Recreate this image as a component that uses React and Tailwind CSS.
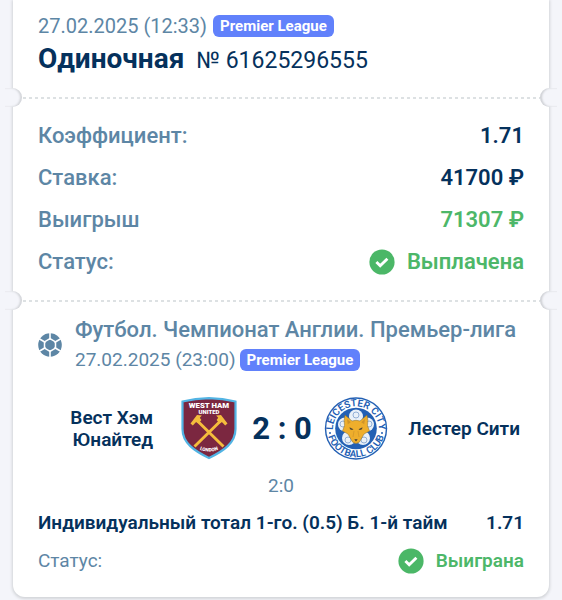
const summary = [
  { label: 'Коэффициент:', value: '1.71', tone: 'text-[#05315c]' },
  { label: 'Ставка:', value: '41700 ₽', tone: 'text-[#05315c]' },
  { label: 'Выигрыш', value: '71307 ₽', tone: 'text-[#4db769]' },
];

const LeagueBadge = () => (
  <span className="rounded-md bg-[#6181fb] px-[7px] text-[15px] leading-[22px] font-bold whitespace-nowrap text-white">
    Premier League
  </span>
);

const CheckIcon = () => (
  <svg viewBox="0 0 26 26" className="h-[26px] w-[26px] shrink-0" aria-hidden="true">
    <circle cx="13" cy="13" r="12.6" fill="#4bb767" />
    <path d="M7.4 13l3.8 3.8 7.2-7" fill="none" stroke="#fff" strokeWidth="2.9" />
  </svg>
);

const BallIcon = () => (
  <svg viewBox="0 0 24 24" className="h-6 w-6 shrink-0" aria-hidden="true">
    <circle cx="12" cy="12" r="11.8" fill="#5d86a5" />
    <g stroke="#fff" fill="none">
      <path d="M12 0v7M12 17v7M7.6 9.5L1.2 5.8M16.4 9.5l6.400-3.700M7.600 14.500l-6.400 3.700M16.400 14.500l6.400 3.700" strokeWidth="1.6" />
      <path d="M12 5.700l5.500 3.150v6.300L12 18.300l-5.500-3.150v-6.300z" strokeWidth="1.500" />
    </g>
  </svg>
);

const WestHamLogo = () => (
  <svg viewBox="0 1 58 64" className="h-16 w-[58px] shrink-0" role="img" aria-label="West Ham United">
    <path
      d="M29 2.200c9 .2 18 1.300 26.500 3.300V33c0 14-12 22-26.500 29C14.500 55 2.500 47 2.500 33V5.500C11 3.500 20 2.400 29 2.200z"
      fill="#7b2740"
      stroke="#52b4e4"
      strokeWidth="2.200"
    />
    <path d="M17 24.500L43.500 50.500M41 24.500L14.500 50.500" stroke="#f5bd3c" strokeWidth="2.900" />
    <g fill="#f5bd3c">
      <path d="M10.500 27.500l6.500-8.500 4.800.6-2 2.200 1.600 2.200-3 3.600-2.300-1.700-3.300 3.600z" />
      <path d="M47.500 27.500L41 19l-4.800.6 2 2.200-1.600 2.200 3 3.600 2.300-1.700 3.300 3.600z" />
    </g>
    <g fill="#fff" fontFamily="Roboto, sans-serif" fontWeight="900" textAnchor="middle">
      <text x="29" y="11.500" fontSize="7.800">WEST HAM</text>
      <text x="29" y="18" fontSize="6">UNITED</text>
      <path id="whu-london" d="M17 52.500Q29 58.500 41 52.500" fill="none" />
      <text fontSize="4.800">
        <textPath href="#whu-london" startOffset="50%">LONDON</textPath>
      </text>
    </g>
  </svg>
);

const LeicesterLogo = () => (
  <svg viewBox="0 1 64 64" className="h-16 w-16 shrink-0" role="img" aria-label="Leicester City">
    <defs>
      <path id="lcfc-top" d="M9.300 37a23 23 0 1 1 45.400 0" />
      <path id="lcfc-bottom" d="M2.800 32a29.200 29.200 0 0 0 58.400 0" />
    </defs>
    <circle cx="32" cy="32.500" r="31.200" fill="#2360b4" />
    <circle cx="32" cy="32.500" r="29.800" fill="#fff" />
    <circle cx="32" cy="32.500" r="20.800" fill="#2360b4" />
    <g fill="#e9f0f8">
      <circle cx="32" cy="20.500" r="7" />
      <circle cx="43" cy="28.500" r="7" />
      <circle cx="39" cy="42" r="7" />
      <circle cx="25" cy="42" r="7" />
      <circle cx="21" cy="28.500" r="7" />
    </g>
    <g fill="none" stroke="#7d9fce" strokeWidth=".8">
      <circle cx="32" cy="19" r="3" />
      <circle cx="45" cy="28" r="3" />
      <circle cx="40" cy="44" r="3" />
      <circle cx="24" cy="44" r="3" />
      <circle cx="19" cy="28" r="3" />
    </g>
    <path
      d="M21 19l7 6q4-1.500 8 0l7-6q1.500 5.500.5 10.500l2 5.500-5.500 3-4.500 8q-3.500 3-7 0l-4.500-8-5.500-3 2-5.500q-1-5 .5-10.500z"
      fill="#eeae2c"
      stroke="#7d6a37"
      strokeWidth=".5"
    />
    <path d="M23 23l3.800 3.300-3 2zM41 23l-3.800 3.300 3 2z" fill="#cf942a" />
    <path d="M25.500 31.300l4 2-1.500.8-2-.8zM38.500 31.300l-4 2 1.500.8 2-.8z" fill="#4b4435" />
    <path d="M30.300 43.300h3.400l-1.700 2.200z" fill="#3f3b35" />
    <path d="M30 35l-1 6M34 35l1 6" fill="none" stroke="#cf942a" strokeWidth=".7" />
    <g fill="#2360b4" fontFamily="Roboto, sans-serif" fontWeight="600" textAnchor="middle" fontSize="9.800">
      <text>
        <textPath href="#lcfc-top" startOffset="50%">LEICESTER CITY</textPath>
      </text>
      <text>
        <textPath href="#lcfc-bottom" startOffset="50%">FOOTBALL CLUB</textPath>
      </text>
    </g>
    <circle cx="6" cy="37" r="1" fill="#2360b4" />
    <circle cx="58" cy="37" r="1" fill="#2360b4" />
  </svg>
);

/* Perforated line with a notch cut out of each side of the ticket */
const TearLine = () => (
  <div className="relative h-px">
    <svg className="block h-0.5 w-full" aria-hidden="true">
      <line x1="10" y1="1" x2="100%" y2="1" stroke="#dde1e3" strokeWidth="2" strokeDasharray="3 3" />
    </svg>
    <div className="absolute -top-[9px] -left-2 h-[19px] w-[17px] rounded-r-full bg-[#f4f5fa] shadow-[inset_-2px_0_2px_#d3d5d9]" />
    <div className="absolute -top-[9px] -right-2 h-[19px] w-[17px] rounded-l-full bg-[#f4f5fa] shadow-[inset_2px_0_2px_#cfd1d5]" />
  </div>
);

const App = () => {
  return (
    <main className="bg-[#f4f5fa] px-[13px] pb-[3px] font-[Roboto,sans-serif] text-[#5d86a5]">
      <article className="rounded-b-xl bg-white shadow-[0_1px_3px_1px_#d2d4d8]">
        <header className="px-[25px] pt-3 pb-[17px]">
          <div className="flex items-center gap-1.5">
            <time className="text-xl leading-7">27.02.2025 (12:33)</time>
            <LeagueBadge />
          </div>
          <div className="flex items-baseline gap-3 leading-[38px] text-[#05315c]">
            <h1 className="text-[28px] font-bold">Одиночная</h1>
            <span className="text-[23px]">№ 61625296555</span>
          </div>
        </header>

        <TearLine />

        <dl className="px-[25px] py-[17px] text-[22px] leading-[42px]">
          {summary.map((row) => (
            <div key={row.label} className="flex justify-between">
              <dt className="font-medium">{row.label}</dt>
              <dd className={`font-semibold ${row.tone}`}>{row.value}</dd>
            </div>
          ))}
          <div className="flex justify-between">
            <dt className="font-medium">Статус:</dt>
            <dd className="flex items-center gap-3 font-semibold text-[#4db769]">
              <CheckIcon />
              Выплачена
            </dd>
          </div>
        </dl>

        <TearLine />

        <section className="px-[25px] pt-[14px] pb-[17px]">
          <div className="flex items-center gap-[13px]">
            <BallIcon />
            <div>
              <h2 className="text-[22px] leading-[30px] font-medium whitespace-nowrap">
                Футбол. Чемпионат Англии. Премьер-лига
              </h2>
              <div className="flex items-center gap-1">
                <time className="text-[19px] leading-[30px]">27.02.2025 (23:00)</time>
                <LeagueBadge />
              </div>
            </div>
          </div>

          <div className="mt-[22px] flex items-center text-[19px] leading-[22px] font-semibold text-[#05315c]">
            <div className="flex flex-1 items-center justify-end gap-[27px]">
              <span className="text-right">
                Вест Хэм
                <br />
                Юнайтед
              </span>
              <WestHamLogo />
            </div>
            <span className="pr-3 pl-[14px] text-[31px] leading-10 font-bold">2 : 0</span>
            <div className="flex flex-1 items-center justify-between">
              <LeicesterLogo />
              <span className="pr-1">Лестер Сити</span>
            </div>
          </div>

          <p className="mt-[11px] mb-1 text-center text-[19px] leading-7">2:0</p>

          <div className="flex justify-between text-[19px] leading-[38px] font-semibold whitespace-nowrap text-[#05315c]">
            <span>Индивидуальный тотал 1-го. (0.5) Б. 1-й тайм</span>
            <span>1.71</span>
          </div>
          <div className="flex justify-between text-[19px] leading-[38px]">
            <span>Статус:</span>
            <span className="flex items-center gap-3 font-semibold text-[#4db769]">
              <CheckIcon />
              Выиграна
            </span>
          </div>
        </section>
      </article>
    </main>
  );
};

export default App;
